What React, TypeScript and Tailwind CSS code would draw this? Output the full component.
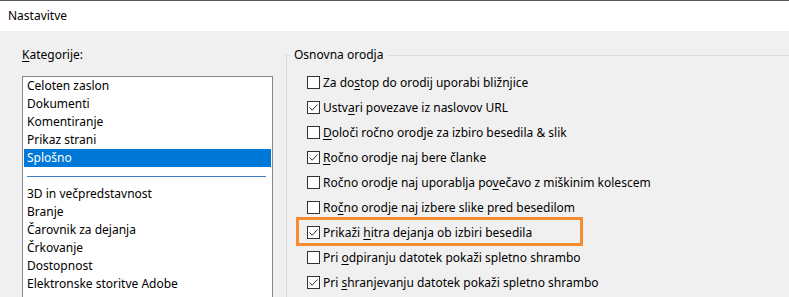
import React from "react";

const categoriesTop = ["Celoten zaslon", "Dokumenti", "Komentiranje", "Prikaz strani", "Splošno"];
const categoriesBottom = [
  "3D in večpredstavnost",
  "Branje",
  "Čarovnik za dejanja",
  "Črkovanje",
  "Dostopnost",
  "Elektronske storitve Adobe",
];

type Opt = { pre: string; key: string; post: string; checked: boolean; highlight?: boolean };

const options: Opt[] = [
  { pre: "Za do", key: "s", post: "top do orodij uporabi bližnjice", checked: false },
  { pre: "Ustv", key: "a", post: "ri povezave iz naslovov URL", checked: true },
  { pre: "", key: "D", post: "oloči ročno orodje za izbiro besedila & slik", checked: false },
  { pre: "", key: "R", post: "očno orodje naj bere članke", checked: true },
  { pre: "Ročno orodje naj uporablja po", key: "v", post: "ečavo z miškinim kolescem", checked: false },
  { pre: "Ro", key: "č", post: "no orodje naj izbere slike pred besedilom", checked: false },
  { pre: "Prikaži ", key: "h", post: "itra dejanja ob izbiri besedila", checked: true, highlight: true },
  { pre: "Pri ", key: "o", post: "dpiranju datotek pokaži spletno shrambo", checked: false },
  { pre: "Pri ", key: "s", post: "hranjevanju datotek pokaži spletno shrambo", checked: true },
];

function Checkbox({ checked }: { checked: boolean }) {
  return (
    <span className="w-[13px] h-[13px] shrink-0 border border-[#333333] bg-white flex items-center justify-center">
      {checked && (
        <svg width="11" height="11" viewBox="0 0 11 11">
          <path d="M1.5 5.5 L4.2 8.2 L9.5 2.5" fill="none" stroke="#333333" strokeWidth="1" />
        </svg>
      )}
    </span>
  );
}

export default function App() {
  return (
    <div
      className="w-[789px] h-[297px] overflow-hidden flex flex-col text-[12px] text-black"
      style={{ fontFamily: '"Segoe UI", "Noto Sans", sans-serif' }}
    >
      {/* Title bar */}
      <div className="h-[31px] shrink-0 bg-white border-t border-[#5a5a5a] flex items-center pl-[8px] leading-none">
        Nastavitve
      </div>

      <div className="flex-1 bg-[#f0f0f0] flex pt-[16px] pl-[22px]">
        {/* Categories */}
        <div className="w-[251px] shrink-0 flex flex-col">
          <div className="h-[16px] leading-[16px]">
            <span className="underline underline-offset-2">K</span>ategorije:
          </div>
          <div className="mt-[13px] flex-1 -mb-[3px] bg-white border border-[#828790] px-[1px]">
            {categoriesTop.map((c) => (
              <div
                key={c}
                className={
                  "h-[18px] leading-[18px] pl-[3px] " +
                  (c === "Splošno" ? "bg-[#0078d7] text-white" : "")
                }
              >
                {c}
              </div>
            ))}
            <div className="h-[18px] flex items-center pl-[3px] pr-[5px]">
              <div className="h-px w-full bg-[#3f7cbf]" />
            </div>
            {categoriesBottom.map((c) => (
              <div key={c} className="h-[18px] leading-[18px] pl-[3px]">
                {c}
              </div>
            ))}
          </div>
        </div>

        {/* Group box */}
        <fieldset className="ml-[13px] flex-1 border border-[#dcdcdc] -mr-[2px] -mb-[2px]">
          <legend className="ml-[3px] px-[4px] h-[16px] leading-[16px]">Osnovna orodja</legend>
          <div className="pt-[7px] pl-[20px]">
            {options.map((o, i) => (
              <div key={i} className="relative h-[25px] flex items-center gap-[3px] whitespace-nowrap">
                <Checkbox checked={o.checked} />
                <span>
                  {o.pre}
                  <span className="underline underline-offset-2">{o.key}</span>
                  {o.post}
                </span>
                {o.highlight && (
                  <div className="absolute left-[-11px] top-[-3px] w-[287px] h-[29px] border-[3px] border-[#f58a2e] pointer-events-none" />
                )}
              </div>
            ))}
          </div>
        </fieldset>
      </div>
    </div>
  );
}
